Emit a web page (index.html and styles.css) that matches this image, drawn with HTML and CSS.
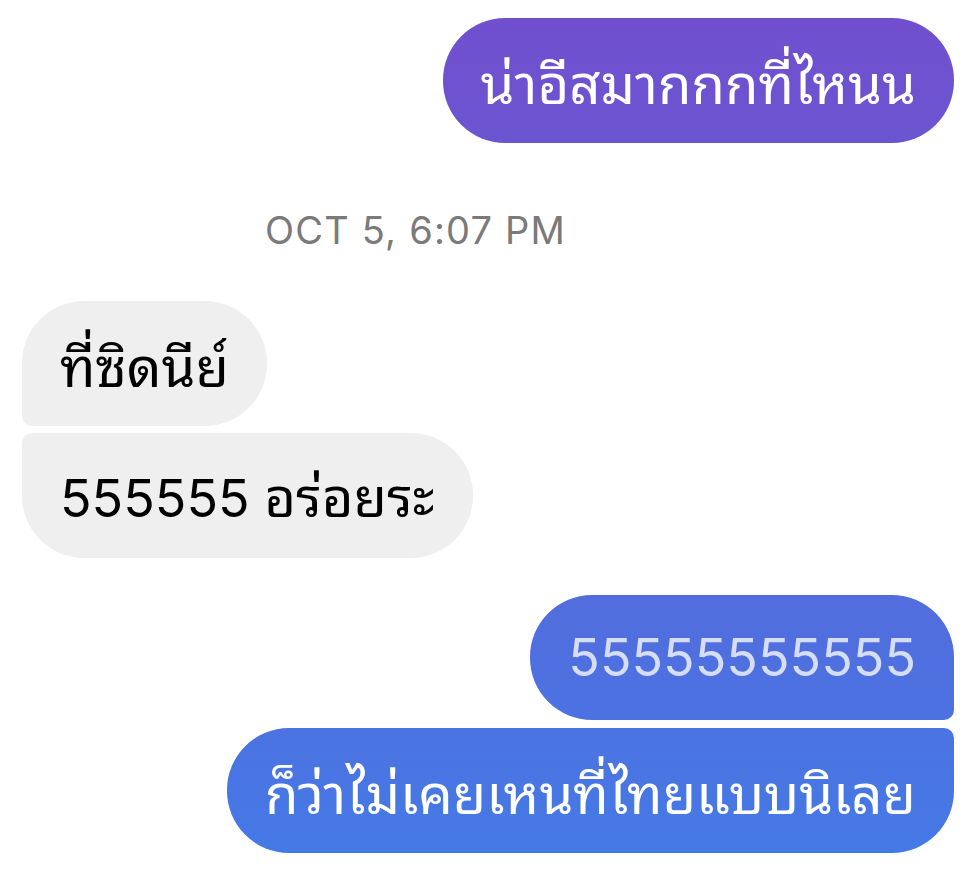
FILE: index.html
```html
<!DOCTYPE html>
<html lang="th">
<head>
<meta charset="utf-8">
<title>Chat</title>
<link rel="stylesheet" href="styles.css">
</head>
<body>
<div class="thread">
  <div class="row row-out first-out">
    <div class="bubble out single"><span class="msg th">น่าอีสมากกกที่ไหนน</span></div>
  </div>
  <div class="stamp">OCT 5, 6:07 PM</div>
  <div class="group group-in">
    <div class="bubble in in-first"><span class="msg th">ที่ซิดนีย์</span></div>
    <div class="bubble in in-last"><span class="msg">555555 <span class="th">อร่อยระ</span></span></div>
  </div>
  <div class="group group-out">
    <div class="bubble out out-first link"><span class="msg">55555555555</span></div>
    <div class="bubble out out-last"><span class="msg th">ก็ว่าไม่เคยเหนที่ไทยแบบนิเลย</span></div>
  </div>
</div>
</body>
</html>
```
FILE: styles.css
```css
html, body {
  margin: 0;
  padding: 0;
  background: #ffffff;
}
body {
  width: 979px;
  height: 882px;
  overflow: hidden;
  font-family: "Inter", "Noto Sans Thai", "Noto Sans", "Liberation Sans", sans-serif;
}
.thread {
  display: flex;
  flex-direction: column;
  padding: 18px 25px 0 22px;
}
.row-out {
  display: flex;
  justify-content: flex-end;
}
.bubble {
  box-sizing: border-box;
  height: 125px;
  display: flex;
  align-items: center;
  padding: 0 38px;
  font-size: 52px;
  line-height: 1;
  white-space: nowrap;
  border-radius: 62px;
}
.msg {
  display: block;
}
.th {
  font-family: "Noto Sans Thai Looped", "Noto Sans Thai", sans-serif;
  font-size: 54.4px;
}
.out {
  color: #ffffff;
  background: linear-gradient(180deg, #724ecd 0px, #437be6 882px) fixed;
  align-self: flex-end;
}
.in {
  color: #000000;
  background: #efefef;
  align-self: flex-start;
}
.stamp {
  margin: 68px 0 0 243px;
  font-size: 38px;
  line-height: 1;
  color: #7a7a7a;
  letter-spacing: 1.2px;
}
.group {
  display: flex;
  flex-direction: column;
  gap: 7px;
}
.group-in {
  margin-top: 52px;
}
.group-out {
  margin-top: 37px;
  gap: 8px;
}
.in-first {
  border-bottom-left-radius: 10px;
}
.in-last {
  border-top-left-radius: 10px;
}
.out-first {
  border-bottom-right-radius: 10px;
}
.out-last {
  border-top-right-radius: 10px;
}
.link {
  color: #d5ddf7;
}
```
